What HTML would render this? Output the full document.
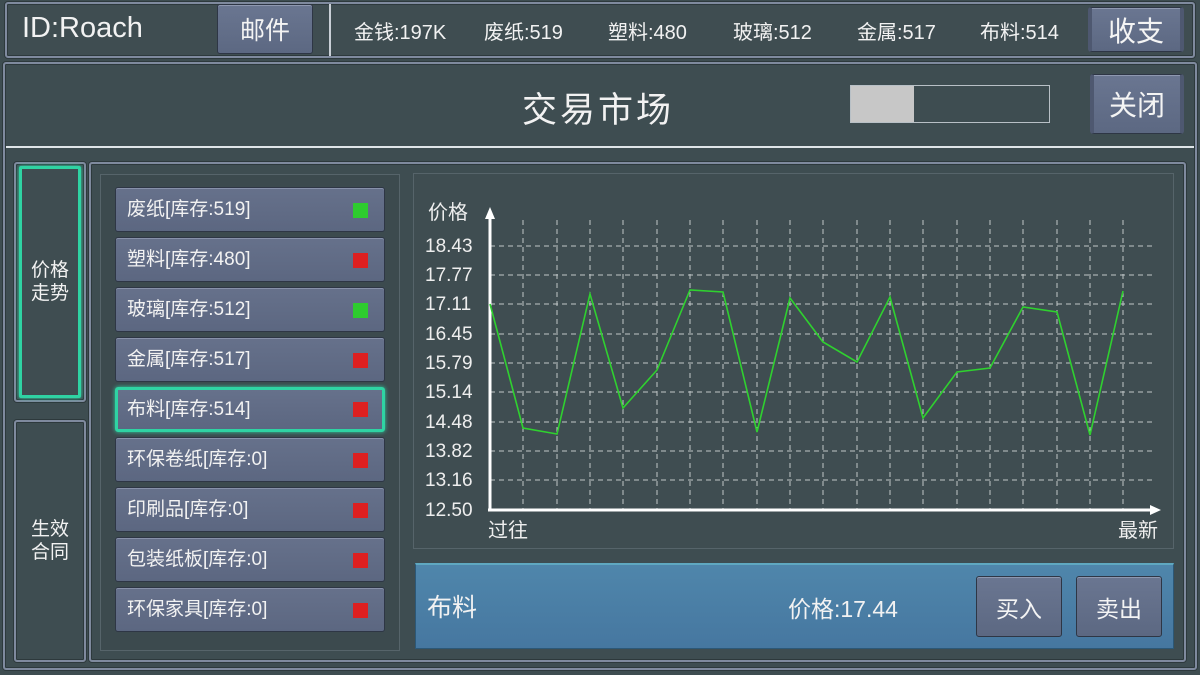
<!DOCTYPE html>
<html><head><meta charset="utf-8"><style>
*{margin:0;padding:0;box-sizing:border-box}
body{width:1200px;height:675px;background:#3e4d51;overflow:hidden;position:relative;font-family:"Liberation Sans","Noto Sans CJK SC",sans-serif;color:#f2f2f2}
.a{position:absolute}
.frame{position:absolute;border:2px solid #7f8a9e;border-radius:3px;box-shadow:inset 0 0 0 1px #2d393c,0 0 0 1px #2d393c}
.btn{position:absolute;background:linear-gradient(#6a7691,#5c6882);border:1px solid #2e3645;border-radius:3px;box-shadow:inset 0 1px 0 #8e98b0;display:flex;align-items:center;justify-content:center;color:#f4f4f4}
.item{position:absolute;left:115px;width:270px;height:45px;background:linear-gradient(#66718b,#5c6781);border:1px solid #2e3645;border-radius:3px;box-shadow:inset 0 1px 0 #8791aa;font-size:19px;padding-left:11px;line-height:44px}
.item i{position:absolute;right:16px;top:15px;width:15px;height:15px;background:#dd2020}
.item i.g{background:#2ecc2e}
.t{position:absolute;font-size:20px;top:16px}
</style></head><body>
<div class="frame" style="left:5px;top:2px;width:1190px;height:56px;background:#3f4d51"></div>
<div class="a" style="left:22px;top:12px;font-size:29px">ID:Roach</div>
<div class="btn" style="left:217px;top:4px;width:96px;height:50px;font-size:25px">邮件</div>
<div class="a" style="left:329px;top:4px;width:2px;height:52px;background:#c9cfd6"></div>
<div class="t" style="left:354px">金钱:197K</div>
<div class="t" style="left:484px">废纸:519</div>
<div class="t" style="left:608px">塑料:480</div>
<div class="t" style="left:733px">玻璃:512</div>
<div class="t" style="left:857px">金属:517</div>
<div class="t" style="left:980px">布料:514</div>
<div class="btn" style="left:1088px;top:7px;width:96px;height:45px;font-size:28px;border-left:4px solid #4e5870;border-right:4px solid #4e5870">收支</div>
<div class="frame" style="left:3px;top:62px;width:1194px;height:608px"></div>
<div class="a" style="left:522px;top:82px;font-size:35px;letter-spacing:3px">交易市场</div>
<div class="a" style="left:850px;top:85px;width:200px;height:38px;border:1px solid #b8c0c6"></div>
<div class="a" style="left:851px;top:86px;width:63px;height:36px;background:#c7c7c7"></div>
<div class="btn" style="left:1090px;top:74px;width:94px;height:60px;font-size:28px;border-left:4px solid #4e5870;border-right:4px solid #4e5870">关闭</div>
<div class="a" style="left:6px;top:146px;width:1188px;height:2px;background:#dfe5e8"></div>
<div class="frame" style="left:14px;top:162px;width:72px;height:240px"></div>
<div class="a" style="left:19px;top:166px;width:62px;height:232px;border:3px solid #2fd3a3;box-shadow:0 0 4px #2fd3a3;border-radius:2px;background:#3f4d51;display:flex;align-items:center;justify-content:center;font-size:19px;text-align:center;line-height:23px">价格<br>走势</div>
<div class="frame" style="left:14px;top:420px;width:72px;height:242px;display:flex;align-items:center;justify-content:center;font-size:19px;text-align:center;line-height:23px">生效<br>合同</div>
<div class="frame" style="left:89px;top:162px;width:1097px;height:500px"></div>
<div class="a" style="left:100px;top:174px;width:300px;height:477px;border:1px solid #56646a;background:#3c4a4e"></div>
<div class="item" style="top:187px">废纸[库存:519]<i class="g"></i></div>
<div class="item" style="top:237px">塑料[库存:480]<i></i></div>
<div class="item" style="top:287px">玻璃[库存:512]<i class="g"></i></div>
<div class="item" style="top:337px">金属[库存:517]<i></i></div>
<div class="item" style="top:387px;border:3px solid #2fd3a3;box-shadow:0 0 4px #2fd3a3;padding-left:9px;line-height:40px">布料[库存:514]<i style="top:12px;right:14px"></i></div>
<div class="item" style="top:437px">环保卷纸[库存:0]<i></i></div>
<div class="item" style="top:487px">印刷品[库存:0]<i></i></div>
<div class="item" style="top:537px">包装纸板[库存:0]<i></i></div>
<div class="item" style="top:587px">环保家具[库存:0]<i></i></div>
<div class="a" style="left:413px;top:173px;width:761px;height:376px;border:1px solid #56646a;background:#3f4d51"></div>
<svg class="a" style="left:0;top:0" width="1200" height="675">
<g stroke="#d8dcdc" stroke-width="1" stroke-dasharray="5,4" fill="none" opacity="0.85">
<path d="M490 246H1152M490 275H1152M490 304H1152M490 334H1152M490 363H1152M490 392H1152M490 422H1152M490 451H1152M490 480H1152"/>
<path d="M523 220V510M557 220V510M590 220V510M623 220V510M657 220V510M690 220V510M723 220V510M757 220V510M790 220V510M823 220V510M857 220V510M890 220V510M923 220V510M957 220V510M990 220V510M1023 220V510M1057 220V510M1090 220V510M1123 220V510"/>
</g>
<path d="M490 510V216M488 510H1154" stroke="#fff" stroke-width="3" fill="none"/>
<path d="M485 219L490 207L495 219Z M1150 505L1161 510L1150 515Z" fill="#fff"/>
<polyline fill="none" stroke="#2fd12f" stroke-width="1.6" points="490,304 523,428 557,434 590,294 623,408 657,370 690,290 723,292 757,432 790,298 823,342 857,362 890,297 923,418 957,372 990,368 1023,307 1057,312 1090,435 1123,291"/>
<g fill="#eee" font-size="19" font-family="Liberation Sans,sans-serif">
<text x="425" y="252">18.43</text><text x="425" y="281">17.77</text><text x="425" y="310">17.11</text><text x="425" y="340">16.45</text><text x="425" y="369">15.79</text><text x="425" y="398">15.14</text><text x="425" y="428">14.48</text><text x="425" y="457">13.82</text><text x="425" y="486">13.16</text><text x="425" y="516">12.50</text>
</g>
<g fill="#eee" font-size="20" font-family="Liberation Sans,Noto Sans CJK SC,sans-serif">
<text x="428" y="219">价格</text><text x="488" y="537">过往</text><text x="1118" y="537">最新</text>
</g>
</svg>
<div class="a" style="left:415px;top:563px;width:759px;height:86px;background:linear-gradient(#4f86ab,#4677a0);border:1px solid #2c5877;border-top:2px solid #5fa8c0"></div>
<div class="a" style="left:427px;top:588px;font-size:25px">布料</div>
<div class="a" style="left:788px;top:590px;font-size:23px">价格:17.44</div>
<div class="btn" style="left:976px;top:576px;width:86px;height:61px;font-size:23px">买入</div>
<div class="btn" style="left:1076px;top:576px;width:86px;height:61px;font-size:23px">卖出</div>
</body></html>
